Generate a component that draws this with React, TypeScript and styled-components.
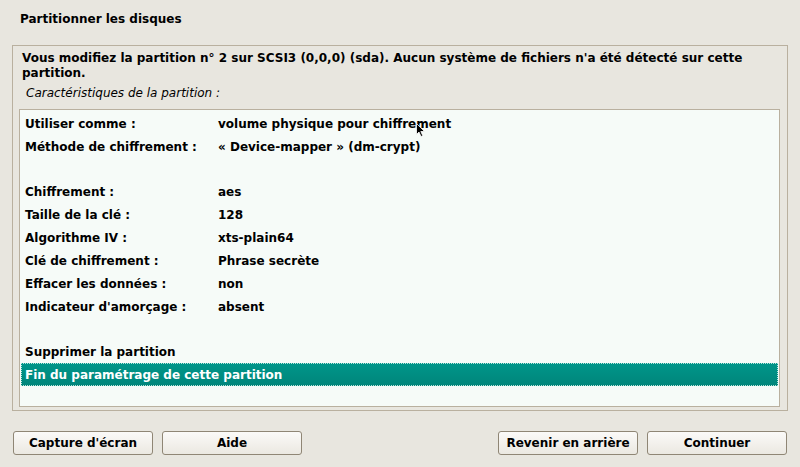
import React from "react";
import styled, { createGlobalStyle } from "styled-components";

const Global = createGlobalStyle`
  html, body { margin: 0; padding: 0; }
  body {
    background: #e8e6df;
    font-family: "DejaVu Sans", "Liberation Sans", sans-serif;
    font-size: 12px;
    color: #000;
  }
`;

const Page = styled.div`
  position: relative;
  width: 800px;
  height: 467px;
  background: #e8e6df;
  display: flex;
  flex-direction: column;
  box-sizing: border-box;
  overflow: hidden;
`;

const Title = styled.div`
  font-weight: bold;
  font-size: 12px;
  line-height: 15px;
  padding: 12px 0 0 20px;
  height: 45px;
  flex-shrink: 0;
  box-sizing: border-box;
`;

const Frame = styled.div`
  margin: 0 12px;
  height: 366px;
  flex-shrink: 0;
  box-sizing: border-box;
  border: 1px solid #b9b09f;
  display: flex;
  flex-direction: column;
  padding: 5px 7px 3px 6px;
`;

const Message = styled.div`
  font-weight: bold;
  line-height: 15px;
  padding-left: 3px;
`;

const Caption = styled.div`
  font-style: italic;
  line-height: 15px;
  padding: 5px 0 0 7px;
  margin-bottom: 8px;
`;

const ListBox = styled.div`
  flex: 1;
  background: #f6fbf8;
  border: 1px solid #b9b09f;
  padding: 2px 1px 1px;
  display: flex;
  flex-direction: column;
`;

const Row = styled.div<{ $selected?: boolean; $blank?: boolean }>`
  height: ${(p) => (p.$blank ? "22px" : "23px")};
  flex-shrink: 0;
  box-sizing: border-box;
  display: grid;
  grid-template-columns: 193px 1fr;
  align-items: center;
  padding-left: 4px;
  font-weight: bold;
  color: ${(p) => (p.$selected ? "#ffffff" : "#000")};
  background: ${(p) =>
    p.$selected ? "linear-gradient(#00968a, #00857a)" : "transparent"};
  outline: ${(p) => (p.$selected ? "1px dotted #b9e4dc" : "none")};
  outline-offset: -1px;
`;

const Cell = styled.span`
  white-space: nowrap;
`;

const ButtonBar = styled.div`
  display: flex;
  align-items: center;
  padding: 20px 13px 0 13px;
  gap: 9px;
`;

const Spacer = styled.div`
  flex: 1;
`;

const Button = styled.button`
  width: 140px;
  height: 24px;
  box-sizing: border-box;
  border: 1px solid #8f8675;
  border-radius: 3px;
  background: linear-gradient(#fbfaf8, #ebe8e1);
  font-family: "DejaVu Sans", "Liberation Sans", sans-serif;
  font-size: 12px;
  font-weight: bold;
  color: #000;
  padding: 0;
`;

const Cursor = styled.svg`
  position: absolute;
  left: 416px;
  top: 123px;
  pointer-events: none;
`;

const rows: Array<[string, string] | null> = [
  ["Utiliser comme :", "volume physique pour chiffrement"],
  ["Méthode de chiffrement :", "« Device-mapper » (dm-crypt)"],
  null,
  ["Chiffrement :", "aes"],
  ["Taille de la clé :", "128"],
  ["Algorithme IV :", "xts-plain64"],
  ["Clé de chiffrement :", "Phrase secrète"],
  ["Effacer les données :", "non"],
  ["Indicateur d'amorçage :", "absent"],
  null,
  ["Supprimer la partition", ""],
];

export default function App() {
  return (
    <Page>
      <Global />
      <Title>Partitionner les disques</Title>
      <Frame>
        <Message>
          Vous modifiez la partition n° 2 sur SCSI3 (0,0,0) (sda). Aucun système de fichiers n'a été détecté sur cette
          <br />
          partition.
        </Message>
        <Caption>Caractéristiques de la partition :</Caption>
        <ListBox>
          {rows.map((r, i) => (
            <Row key={i} $blank={!r}>
              <Cell>{r ? r[0] : ""}</Cell>
              <Cell>{r ? r[1] : ""}</Cell>
            </Row>
          ))}
          <Row $selected>
            <Cell>Fin du paramétrage de cette partition</Cell>
            <Cell />
          </Row>
        </ListBox>
      </Frame>
      <ButtonBar>
        <Button>Capture d'écran</Button>
        <Button>Aide</Button>
        <Spacer />
        <Button>Revenir en arrière</Button>
        <Button>Continuer</Button>
      </ButtonBar>
      <Cursor width="10" height="15" viewBox="0 0 10 15">
        <path d="M0.5 0.5 L0.5 11.5 L3 9 L5 13.5 L6.8 12.7 L4.8 8.5 L8.5 8.5 Z" fill="#000" stroke="#fff" strokeWidth="0.8" />
      </Cursor>
    </Page>
  );
}
